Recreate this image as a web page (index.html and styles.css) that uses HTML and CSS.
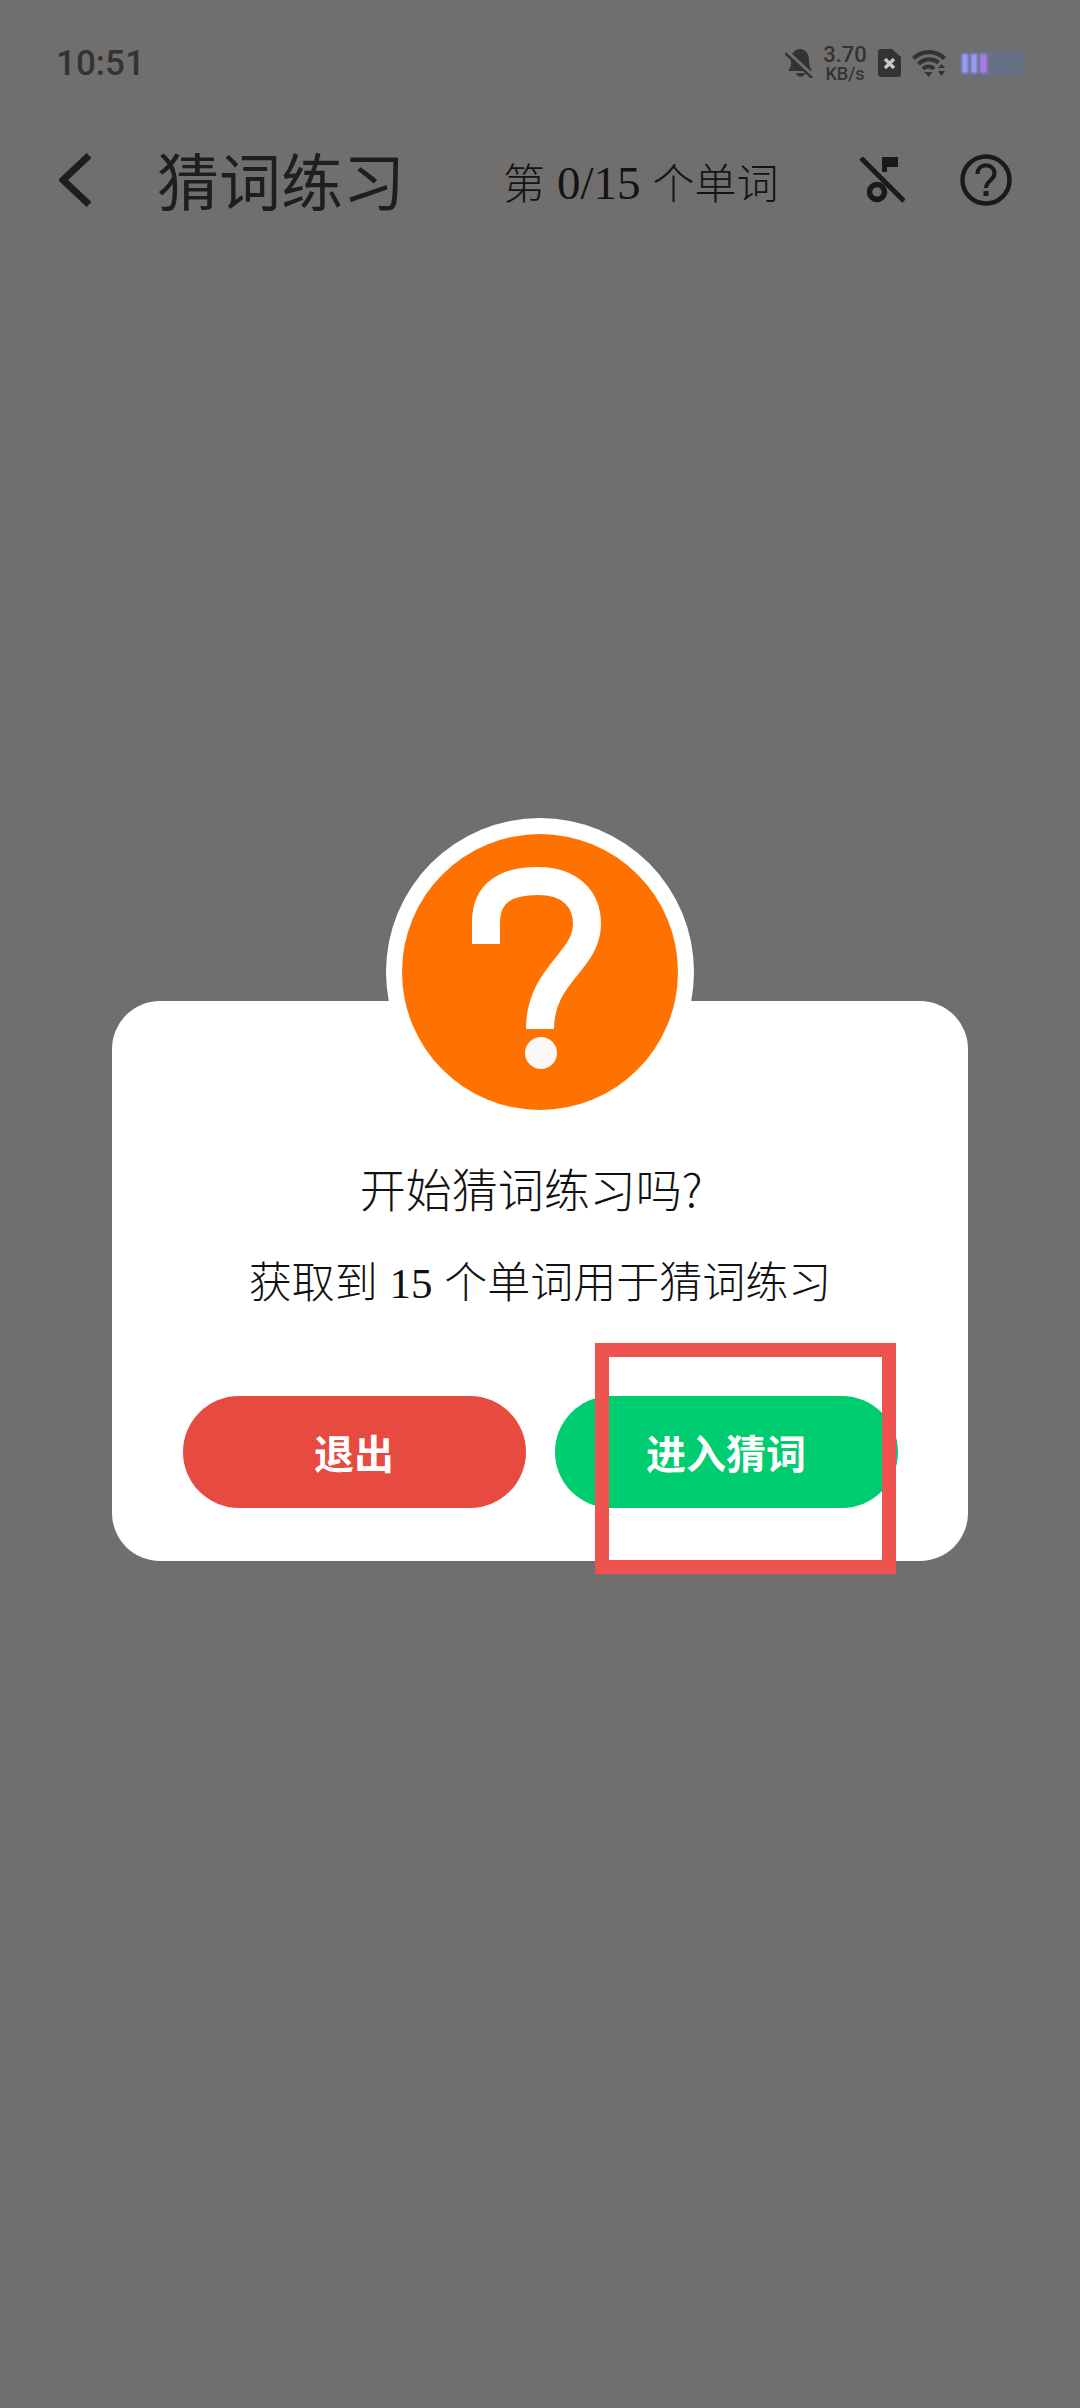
FILE: index.html
```html
<!DOCTYPE html>
<html lang="zh">
<head>
<meta charset="utf-8">
<title>猜词练习</title>
<link rel="stylesheet" href="styles.css">
</head>
<body>
<div class="screen">

  <div class="statusbar">
    <span class="clock">10:51</span>
    <div class="status-icons">
      <svg class="ic-bell" viewBox="0 0 28 30" width="28" height="30">
        <path d="M3 23 C6 20 6 17 6 12 C6 5 10 1 15 1 C20 1 24 5 24 12 C24 17 25 20 27 23 Z" fill="#333"/>
        <path d="M11 25 H20 C19 30 12 30 11 25 Z" fill="#333"/>
        <path d="M1 3 L27 27" stroke="#706f6e" stroke-width="4"/>
        <path d="M0 5 L27 30" stroke="#333" stroke-width="2.4"/>
      </svg>
      <div class="speed">
        <span class="speed-num">3.70</span>
        <span class="speed-unit">KB/s</span>
      </div>
      <svg class="ic-sim" viewBox="0 0 23 28" width="23" height="28">
        <path d="M3 0 H14 L23 8 V25 A3 3 0 0 1 20 28 H3 A3 3 0 0 1 0 25 V3 A3 3 0 0 1 3 0 Z" fill="#333"/>
        <path d="M7 10 L16 19 M16 10 L7 19" stroke="#c9c9c9" stroke-width="3.200"/>
      </svg>
      <svg class="ic-wifi" viewBox="0 0 34 28" width="34" height="28">
        <path d="M1.500 9.500 C10 1 24 1 32.500 9.500" fill="none" stroke="#333" stroke-width="4.200"/>
        <path d="M6.500 15 C12 9 21 9 26.500 13.500" fill="none" stroke="#333" stroke-width="4.200"/>
        <path d="M11 20 C14 16.500 19 16.500 22 20" fill="none" stroke="#333" stroke-width="4"/>
        <path d="M12.500 23 H20.500 L16.500 28 Z" fill="#333"/>
        <path d="M26 19 H33 L29.500 15 Z M26 22 H33 L29.500 27 Z" fill="#333"/>
      </svg>
      <div class="battery">
        <i class="cell cell-a"></i><i class="cell cell-b"></i><i class="cell cell-c"></i>
      </div>
    </div>
  </div>

  <div class="topbar">
    <svg class="ic-back" viewBox="0 0 32 54" width="32" height="54">
      <path d="M30 2.500 L4 27 L30 51.500" fill="none" stroke="#1e1e1e" stroke-width="7"/>
    </svg>
    <h1 class="page-title">猜词练习</h1>
    <span class="progress">第 <span class="progress-num">0/15</span> 个单词</span>
    <svg class="ic-music" viewBox="0 0 46 46" width="46" height="46">
      <path d="M2 1 L45 44" stroke="#1a1a1a" stroke-width="5"/>
      <circle cx="18" cy="35" r="7.500" fill="none" stroke="#1a1a1a" stroke-width="5.500"/>
      <path d="M23 0 H39 V10 H28 V15 H23 Z" fill="#1a1a1a"/>
    </svg>
    <svg class="ic-help" viewBox="0 0 52 52" width="52" height="52">
      <circle cx="26" cy="26" r="23.500" fill="none" stroke="#1a1a1a" stroke-width="4.500"/>
      <path d="M17.500 20 C17.500 8 34.500 9 34.500 19.500 C34.500 26 26 26.500 26 34" fill="none" stroke="#1a1a1a" stroke-width="4"/>
      <rect x="23.500" y="37" width="5" height="5" fill="#1a1a1a"/>
    </svg>
  </div>

  <div class="dialog">
    <div class="badge">
      <svg viewBox="0 0 276 276" width="276" height="276">
        <circle cx="138" cy="138" r="138" fill="#ff7200"/>
        <path d="M84 110 V88 C84 58 105 47 136 47 C168 47 185 65 185 90 C185 128 138 140 138 195" fill="none" stroke="#fff" stroke-width="28"/>
        <circle cx="139" cy="219" r="16" fill="#faf8f8"/>
      </svg>
    </div>
    <h2 class="dialog-title">开始猜词练习吗?</h2>
    <p class="dialog-text">获取到 15 个单词用于猜词练习</p>
    <div class="actions">
      <button class="btn btn-exit">退出</button>
      <button class="btn btn-enter">进入猜词</button>
    </div>
    <div class="marker"></div>
  </div>

</div>
</body>
</html>
```

FILE: styles.css
```css
* {
  box-sizing: border-box;
}

body {
  margin: 0;
  background: #706f6e;
}

.screen {
  width: 1080px;
  height: 2408px;
  overflow: hidden;
  font-family: "Liberation Serif", "Noto Sans CJK SC", serif;
}

/* status bar */
.statusbar {
  display: flex;
  align-items: center;
  justify-content: space-between;
  height: 126px;
  padding: 0 56px 0 56px;
}

.clock {
  font-family: "Roboto", sans-serif;
  font-size: 35px;
  font-weight: 500;
  color: #333;
}

.status-icons {
  display: flex;
  align-items: center;
}

.speed {
  display: flex;
  flex-direction: column;
  align-items: center;
  width: 42px;
  margin-left: 11px;
  font-family: "Roboto", sans-serif;
  font-weight: 500;
  color: #333;
}

.speed-num {
  font-size: 22px;
  line-height: 20px;
}

.speed-unit {
  font-size: 18px;
  line-height: 17px;
}

.ic-sim {
  margin-left: 12px;
}

.ic-wifi {
  margin-left: 11px;
}

.battery {
  display: flex;
  gap: 3px;
  width: 64px;
  height: 25px;
  margin-left: 14px;
  padding: 3px 2px;
  background: #687086;
  filter: blur(1px);
}

.cell {
  width: 6px;
  background: #9b9bf8;
}

.cell-c {
  width: 7px;
  background: #a77ce8;
}

/* top bar */
.topbar {
  display: flex;
  align-items: center;
  height: 108px;
  padding-left: 59px;
}

.page-title {
  margin: 0 0 0 66px;
  padding-top: 10px;
  font-size: 62px;
  font-weight: 400;
  line-height: 80px;
  color: #1e1e1e;
}

.progress {
  margin-left: 98px;
  font-size: 42px;
  font-weight: 300;
  word-spacing: 1.5px;
  white-space: nowrap;
  color: #141414;
}

.progress-num {
  font-size: 47px;
}

.ic-music {
  margin-left: 80px;
}

.ic-help {
  margin-left: 55px;
}

/* dialog */
.dialog {
  position: relative;
  display: flex;
  flex-direction: column;
  align-items: center;
  width: 856px;
  height: 560px;
  margin: 767px 0 0 112px;
  background: #fff;
  border-radius: 48px;
}

.badge {
  display: flex;
  align-items: center;
  justify-content: center;
  width: 308px;
  height: 308px;
  margin-top: -183px;
  background: #fff;
  border-radius: 50%;
}

.dialog-title {
  margin: 31px 18px 0 0;
  font-family: "Noto Sans CJK SC", sans-serif;
  font-size: 46px;
  font-weight: 300;
  line-height: 60px;
  color: #111;
}

.dialog-text {
  margin: 37px 0 0 0;
  font-size: 43px;
  font-weight: 300;
  word-spacing: 1px;
  line-height: 60px;
  color: #111;
}

.actions {
  display: flex;
  gap: 29px;
  margin-top: 82px;
}

.btn {
  width: 343px;
  height: 112px;
  padding: 0;
  border: 0;
  border-radius: 56px;
  font-family: "Noto Sans CJK SC", sans-serif;
  font-size: 40px;
  font-weight: 700;
  color: #fff;
}

.btn-exit {
  background: #e74a3f;
}

.btn-enter {
  background: #00cc70;
}

/* red frame drawn over the dialog */
.marker {
  position: absolute;
  left: 483px;
  top: 342px;
  width: 301px;
  height: 231px;
  border: 14px solid #ee5350;
}
```
